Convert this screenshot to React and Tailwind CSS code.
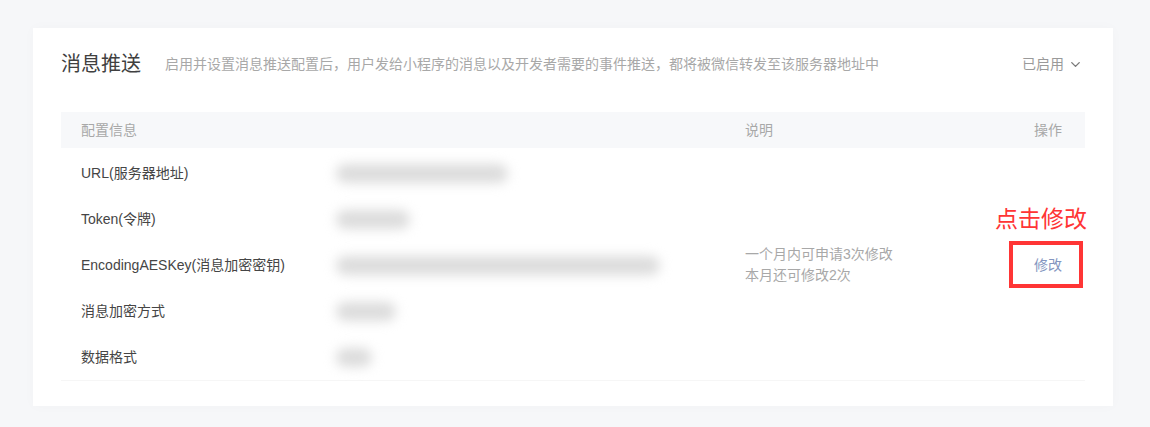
import React from "react";
import { ChevronDown } from "lucide-react";

const rows = [
  { label: "URL(服务器地址)", blob: "w-[172px]" },
  { label: "Token(令牌)", blob: "w-[74px]" },
  { label: "EncodingAESKey(消息加密密钥)", blob: "w-[324px]" },
  { label: "消息加密方式", blob: "w-[60px]" },
  { label: "数据格式", blob: "w-[36px]" },
];

export default function App() {
  return (
    <div
      className="w-[1150px] h-[427px] bg-[#f6f7f9] pt-[28px] pl-[33px]"
      style={{ fontFamily: '"Liberation Sans", "Noto Sans CJK SC", sans-serif' }}
    >
      <div className="w-[1080px] h-[378px] bg-white px-[28px] pt-[22px] shadow-[0_0_12px_rgba(0,0,0,0.025)]">
        {/* title bar */}
        <div className="flex items-center h-[28px]">
          <h2 className="text-[20px] text-[#404040] leading-[28px]">消息推送</h2>
          <p className="ml-[24px] text-[14px] text-[#a8a8a8]">
            启用并设置消息推送配置后，用户发给小程序的消息以及开发者需要的事件推送，都将被微信转发至该服务器地址中
          </p>
          <div className="ml-auto flex items-center gap-[4px] text-[14px] text-[#9a9a9a] pr-[2px]">
            已启用
            <ChevronDown size={15} strokeWidth={2.2} className="text-[#7a7a7a]" />
          </div>
        </div>

        {/* table */}
        <div className="mt-[34px]">
          <div className="grid grid-cols-[249px_415px_1fr_auto] items-center h-[36px] bg-[#f7f8fa] px-[20px] pr-[23px] text-[14px] text-[#a8a8a8]">
            <div>配置信息</div>
            <div />
            <div>说明</div>
            <div>操作</div>
          </div>

          <div className="mt-[2px] grid grid-cols-[249px_415px_1fr_auto] grid-rows-[repeat(5,46px)] px-[20px] pr-[23px] border-b border-[#f6f6f6] text-[14px]">
            {rows.map((r, i) => (
              <React.Fragment key={r.label}>
                <div className="col-start-1 flex items-center text-[#454545]" style={{ gridRowStart: i + 1 }}>
                  {r.label}
                </div>
                <div className="col-start-2 flex items-center pl-[6px]" style={{ gridRowStart: i + 1 }}>
                  <div className={`${r.blob} h-[19px] rounded-full bg-[#dcdcdc] blur-[6px]`} />
                </div>
              </React.Fragment>
            ))}

            <div className="col-start-3 row-start-1 row-span-5 self-center text-[#a8a8a8] leading-[21px]">
              <div>一个月内可申请3次修改</div>
              <div>本月还可修改2次</div>
            </div>

            <div className="col-start-4 row-start-1 row-span-5 self-center">
              <div className="relative">
                <span className="text-[#8496c0]">修改</span>
                <div className="absolute left-[-25px] right-[-21px] top-[-14px] bottom-[-12px] border-[4px] border-[#ff3535]" />
                <div className="absolute right-[-25px] top-[-50px] text-[23px] leading-[28px] text-[#ff3535] whitespace-nowrap">
                  点击修改
                </div>
              </div>
            </div>
          </div>
        </div>
      </div>
    </div>
  );
}
